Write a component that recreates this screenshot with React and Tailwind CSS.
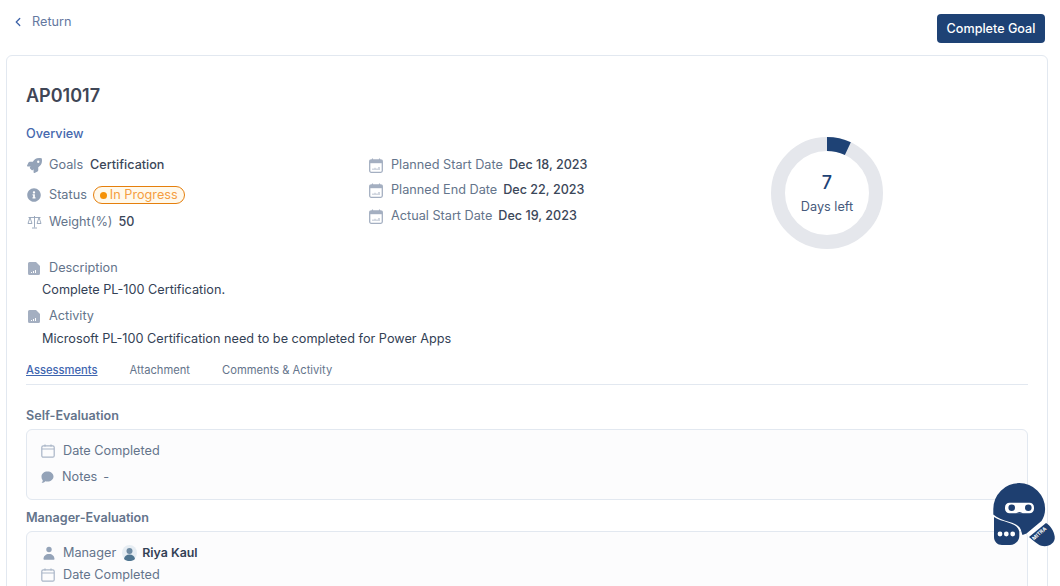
import React from 'react';
import { ChevronLeft } from 'lucide-react';
import { FaRocket, FaInfoCircle } from 'react-icons/fa';

const ScaleIcon = () => (
  <svg width="15" height="14" viewBox="0 0 15 14" className="shrink-0" fill="none" stroke="#94a3b8" strokeWidth="0.9">
    <path d="M7.500 1v11.500M5 13h5M1.500 2.500h12M3 2.500 1 8.500h4L3 2.500zM12 2.500l-2 6h4l-2-6z" />
  </svg>
);

const CalendarChartIcon = () => (
  <svg width="14" height="15" viewBox="0 0 14 15" className="shrink-0">
    <rect x="0.700" y="2" width="12.600" height="12.300" rx="1.500" fill="#fff" stroke="#a4afc1" strokeWidth="1.300" />
    <rect x="0.700" y="2" width="12.600" height="3.200" fill="#a4afc1" />
    <path d="M3.500 0.500v2.500M10.500 0.500v2.500" stroke="#a4afc1" strokeWidth="1.100" />
    <path d="M4 12v-1.500M6 12V9.800M8 12v-1.500M10 12V9" stroke="#a4afc1" strokeWidth="1" />
  </svg>
);

const FileIcon = () => (
  <svg width="12" height="13" viewBox="0 0 12 13" className="shrink-0">
    <path d="M1.500 0H8l4 4v7.500A1.500 1.500 0 0 1 10.500 13h-9A1.500 1.500 0 0 1 0 11.500v-10A1.500 1.500 0 0 1 1.500 0z" fill="#a4afc1" />
    <path d="M3.500 11v-1M5.500 11V9M7.500 11V8" stroke="#fff" strokeWidth="1" />
  </svg>
);

const CalendarIcon = () => (
  <svg width="14" height="14" viewBox="0 0 14 14" className="shrink-0" fill="none" stroke="#a9b5c7" strokeWidth="1.200">
    <rect x="0.800" y="1.800" width="12.400" height="11.400" rx="1.500" />
    <path d="M0.800 5h12.400M4 0.500v2M10 0.500v2" />
  </svg>
);

const ChatIcon = () => (
  <svg width="13" height="12" viewBox="0 0 13 12" className="shrink-0" fill="#94a3b8">
    <path d="M6.500 0.500c3.400 0 6 2.100 6 5s-2.600 5-6 5c-.8 0-1.500-.1-2.200-.3C3.400 11.300 2 11.900.6 11.800c.7-.6 1.100-1.500 1.200-2.400C.9 8.400.500 7 .500 5.500c0-2.900 2.600-5 6-5z" />
  </svg>
);

const PersonIcon = () => (
  <svg width="12" height="14" viewBox="0 0 12 14" className="shrink-0" fill="#94a3b8">
    <circle cx="6" cy="3.500" r="2.700" />
    <path d="M0.500 13c0-3 2.400-5 5.500-5s5.500 2 5.500 5c0 .4-.3.700-.7.700H1.200c-.4 0-.7-.3-.7-.7z" />
  </svg>
);

const Avatar = () => (
  <svg width="15" height="16" viewBox="0 0 15 16" className="shrink-0">
    <ellipse cx="7.500" cy="8" rx="7.500" ry="8" fill="#e6edf3" />
    <circle cx="7.500" cy="6" r="3" fill="#6f8ba3" />
    <path d="M2 14c.4-3 2.600-4.500 5.500-4.500S12.600 11 13 14c-1.500 1.400-3.400 2-5.500 2S3.500 15.400 2 14z" fill="#4f7590" />
  </svg>
);

const MitraBot = () => (
  <svg width="63" height="66" viewBox="0 0 63 66" className="absolute left-[993px] top-[481px]">
    {/* tail with the name on it */}
    <path d="M36 56 53 42c4 2 8 8 8.700 13.500.8 6-4.700 9.700-10 9.700-5 0-7-2-15.700-9.200z" fill="#1e3f70" />
    {/* head */}
    <path d="M.3 28a25.900 25.900 0 0 1 51.800 0c0 5-1.600 9-3.600 12L33.500 52.500l-4 1.500c-.5-1-.7-2-1-3-1-5.500-5-8-12-10C9.500 39 4 37 .3 33.500z" fill="#1e3f70" />
    {/* speech bubble */}
    <path d="M1 36c4 2.500 9 4 14 5.500 7 2 10.500 4.500 11.300 9.500v4c0 5-4.300 9-9.300 9H9c-4.500 0-8-3.500-8-8z" fill="#1e3f70" />
    <rect x="12" y="21.700" width="29" height="10.600" rx="4.500" fill="#fff" />
    <circle cx="18.700" cy="26.700" r="3.300" fill="#1e3f70" />
    <circle cx="35.300" cy="26.700" r="3.300" fill="#1e3f70" />
    <path d="M23 32.500q3.500-3 7 0z" fill="#1e3f70" />
    <circle cx="7" cy="53" r="2.400" fill="#fff" />
    <circle cx="13.300" cy="53" r="2.400" fill="#fff" />
    <circle cx="19.700" cy="53" r="2.400" fill="#fff" />
    <text transform="translate(41 59.500) rotate(-41)" fontSize="5.200" fontWeight="700" fill="#fff" fontFamily="Inter, sans-serif">MITRA</text>
  </svg>
);

const Donut = () => (
  <div className="relative w-[112px] h-[112px]">
    <svg width="112" height="112" viewBox="0 0 112 112">
      <circle cx="56" cy="56" r="49" fill="none" stroke="#e5e7ec" strokeWidth="14" />
      <circle cx="56" cy="56" r="49" fill="none" stroke="#1e4275" strokeWidth="14" strokeDasharray="21.550 307.880" transform="rotate(-90 56 56)" />
    </svg>
    <div className="absolute inset-0 flex flex-col items-center justify-center">
      <span className="text-lg leading-[20px] font-medium text-[#1e4275] mt-[2px]">7</span>
      <span className="leading-[18px] mt-[5px] text-[#475a7c]">Days left</span>
    </div>
  </div>
);

const Field = ({ icon, label, children, className = '' }) => (
  <div className={`flex items-center ${className}`}>
    <span className="w-[23px] pl-[1px] flex shrink-0">{icon}</span>
    <span className="text-[#64748b]">{label}</span>
    {children}
  </div>
);

const Value = ({ className = '', children }) => (
  <span className={`font-medium text-[12.6px] text-[#3b4759] ${className}`}>{children}</span>
);

const App = () => {
  return (
    <div className="relative w-[1060px] h-[586px] overflow-hidden bg-white font-['Inter',sans-serif] text-[12.7px] leading-[18px] text-[#334155]">
      <div className="flex justify-between items-start pl-[14px] pr-[15px] pt-[14px] h-[55px]">
        <a className="flex items-center mt-[-1px] h-[18px]">
          <ChevronLeft size={14} strokeWidth={2.200} className="text-[#3d63a8] ml-[-3px]" />
          <span className="ml-[7px] text-[#64789f]">Return</span>
        </a>
        <button className="h-[29px] w-[108px] rounded bg-[#1e4275] text-white font-medium text-[12.6px]">Complete Goal</button>
      </div>

      <div className="ml-[6px] mr-[12px] h-[560px] border border-[#e2e8f0] rounded-md px-[19px]">
        <h1 className="mt-[28px] text-lg leading-[24px] font-semibold text-[#3f4656]">AP01017</h1>
        <div className="mt-[17px] font-medium text-[#4668ae]">Overview</div>

        <div className="flex h-[110px]">
          <div className="w-[342px] pt-[13px]">
            <Field icon={<FaRocket size={15} color="#94a3b8" />} label="Goals">
              <Value className="ml-[7px]">Certification</Value>
            </Field>
            <Field icon={<FaInfoCircle size={14} color="#94a3b8" />} label="Status" className="mt-[12px]">
              <span className="ml-[6px] h-[18px] w-[92px] flex items-center rounded-full border border-[#e57f0c] bg-[#fff9ec] pl-[6px] text-[#f59e42] leading-[16px]">
                <span className="w-[7px] h-[7px] rounded-full bg-[#f59208] mr-[3px]" />
                In Progress
              </span>
            </Field>
            <Field icon={<ScaleIcon />} label="Weight(%)" className="mt-[9px]">
              <Value className="ml-[6px]">50</Value>
            </Field>
          </div>
          <div className="w-[371px] pt-[13px]">
            <Field icon={<CalendarChartIcon />} label="Planned Start Date">
              <Value className="ml-[6px]">Dec 18, 2023</Value>
            </Field>
            <Field icon={<CalendarChartIcon />} label="Planned End Date" className="mt-[7px]">
              <Value className="ml-[6px]">Dec 22, 2023</Value>
            </Field>
            <Field icon={<CalendarChartIcon />} label="Actual Start Date" className="mt-[8px]">
              <Value className="ml-[6px]">Dec 19, 2023</Value>
            </Field>
          </div>
          <div className="pl-[32px] mt-[-6px]">
            <Donut />
          </div>
        </div>

        <div className="mt-[6px]">
          <Field icon={<span className="pl-[1px]"><FileIcon /></span>} label="Description" />
          <p className="mt-[4px] ml-[16px] text-[#334155]">Complete PL-100 Certification.</p>
          <Field icon={<span className="pl-[1px]"><FileIcon /></span>} label="Activity" className="mt-[8px]" />
          <p className="mt-[5px] ml-[16px] text-[#334155]">Microsoft PL-100 Certification need to be completed for Power Apps</p>
        </div>

        <div className="mt-[14px] flex gap-[32px] h-[23px] border-b border-[#e2e8f0] text-[11.2px] leading-[16px] text-[#64748b]">
          <a className="text-[#3f66b0] underline font-medium">Assessments</a>
          <a>Attachment</a>
          <a>Comments &amp; Activity</a>
        </div>

        <h2 className="mt-[22px] font-semibold text-[12.6px] text-[#64748b]">Self-Evaluation</h2>
        <div className="mt-[4px] h-[71px] rounded-md border border-[#e2e8f0] bg-[#fcfcfd] pl-[14px] pt-[12px]">
          <div className="flex items-center">
            <span className="w-[22px] flex"><CalendarIcon /></span>
            <span className="text-[#64748b]">Date Completed</span>
          </div>
          <div className="flex items-center mt-[8px]">
            <span className="w-[21px] flex"><ChatIcon /></span>
            <span className="text-[#64748b]">Notes</span>
            <span className="ml-[6px] text-[#64748b]">-</span>
          </div>
        </div>

        <h2 className="mt-[9px] font-semibold text-[12.6px] text-[#64748b]">Manager-Evaluation</h2>
        <div className="mt-[4px] h-[80px] rounded-md border border-[#e2e8f0] bg-[#fcfcfd] pl-[14px] pt-[12px]">
          <div className="flex items-center">
            <span className="w-[22px] flex pl-[2px]"><PersonIcon /></span>
            <span className="text-[#64748b]">Manager</span>
            <span className="ml-[6px]"><Avatar /></span>
            <span className="ml-[5px] font-semibold text-[12.4px] text-[#334155]">Riya Kaul</span>
          </div>
          <div className="flex items-center mt-[4px]">
            <span className="w-[22px] flex"><CalendarIcon /></span>
            <span className="text-[#64748b]">Date Completed</span>
          </div>
        </div>
      </div>

      <MitraBot />
    </div>
  );
};

export default App;
